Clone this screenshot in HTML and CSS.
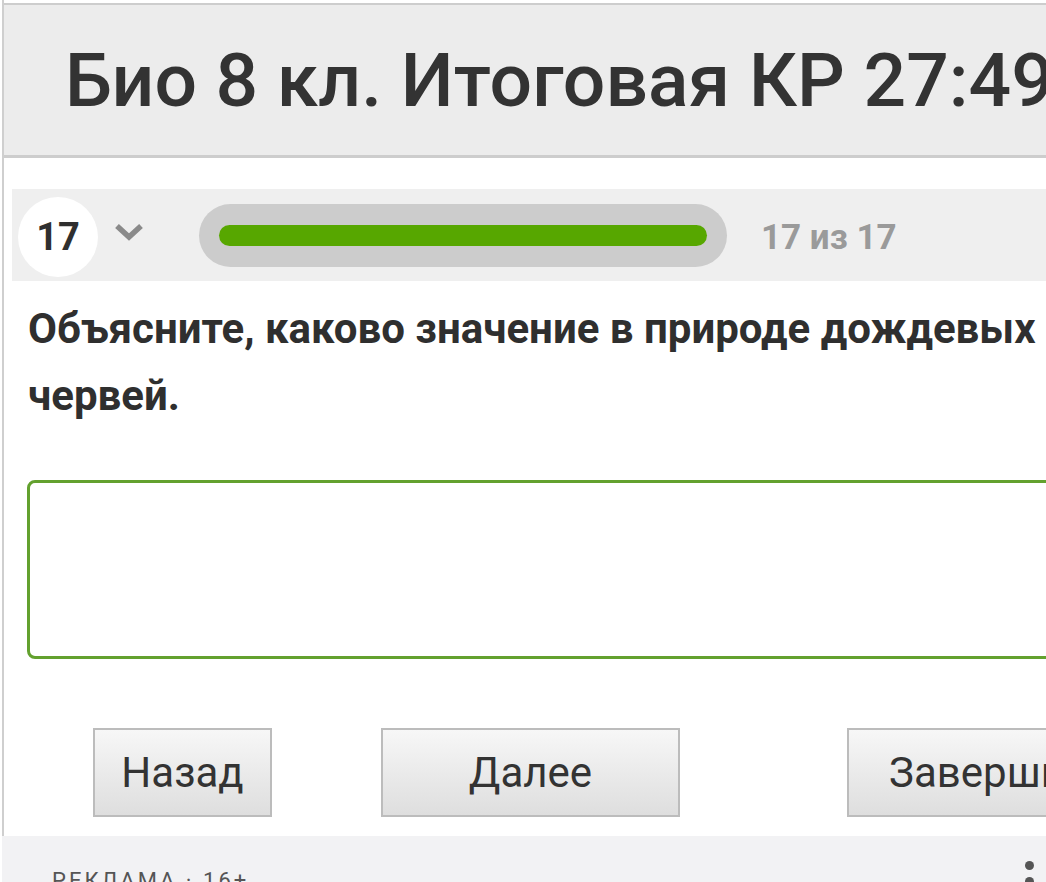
FILE: index.html
```html
<!DOCTYPE html>
<html lang="ru">
<head>
<meta charset="utf-8">
<title>Био 8 кл. Итоговая КР</title>
<link rel="stylesheet" href="styles.css">
</head>
<body>
<div class="page">
  <header class="test-header">
    <h1 class="test-title">Био 8 кл. Итоговая КР 27:49</h1>
  </header>

  <main class="quiz">
    <div class="quiz-nav">
      <div class="q-number">17</div>
      <svg class="q-chevron" width="30" height="20" viewBox="0 0 30 20" aria-hidden="true">
        <path d="M3 3 L15 14 L27 3" fill="none" stroke="#8a8a8a" stroke-width="5.5"/>
      </svg>
      <div class="progress">
        <div class="progress-fill" style="width: 100%"></div>
      </div>
      <div class="q-count">17 из 17</div>
    </div>

    <p class="question">Объясните, каково значение в природе дождевых червей.</p>

    <textarea class="answer"></textarea>

    <div class="actions">
      <button class="btn btn-back" type="button">Назад</button>
      <button class="btn btn-next" type="button">Далее</button>
      <button class="btn btn-finish" type="button">Завершить</button>
    </div>
  </main>

  <aside class="ad">
    <span class="ad-label">РЕКЛАМА · 16+</span>
    <span class="ad-menu" aria-hidden="true"><i></i><i></i><i></i></span>
  </aside>
</div>
</body>
</html>
```

FILE: styles.css
```css
html, body {
  margin: 0;
  padding: 0;
  overflow: hidden;
  background: #ffffff;
}

body {
  font-family: Roboto, "Noto Sans", "Liberation Sans", sans-serif;
  color: #333333;
  width: 1046px;
  height: 882px;
}

.page {
  margin-left: 2px;
  border-left: 2px solid #cfcfcf;
  padding-top: 3px;
  width: 1200px;
}

/* title bar */
.test-header {
  background: #ececec;
  border-top: 2px solid #cdcdcd;
  border-bottom: 3px solid #cdcdcd;
  height: 150px;
  padding-left: 61px;
}

.test-title {
  margin: 0;
  font-size: 75px;
  font-weight: 500;
  line-height: 150px;
  white-space: nowrap;
  color: #333333;
}

/* question area */
.quiz {
  padding-left: 8px;
}

.quiz-nav {
  margin-top: 31px;
  height: 92px;
  background: #efefef;
  display: flex;
  align-items: center;
  padding-left: 6px;
}

.q-number {
  width: 80px;
  height: 80px;
  border-radius: 50%;
  background: #ffffff;
  display: flex;
  align-items: center;
  justify-content: center;
  font-size: 38px;
  font-weight: 700;
  color: #2f2f2f;
  margin-top: 4px;
}

.q-chevron {
  margin-left: 16px;
  margin-top: -4px;
}

.progress {
  margin-left: 55px;
  width: 488px;
  height: 21px;
  padding: 21px 20px;
  background: #cccccc;
  border-radius: 32px;
}

.progress-fill {
  height: 21px;
  border-radius: 11px;
  background: #57a700;
}

.q-count {
  margin-left: 34px;
  font-size: 35px;
  font-weight: 700;
  color: #9a9a9a;
  margin-top: 4px;
}

.question {
  margin: 14px 0 0 16px;
  width: 1016px;
  font-size: 42px;
  font-weight: 700;
  line-height: 67px;
  color: #2f2f2f;
}

.answer {
  display: block;
  margin: 51px 0 0 15px;
  width: 1100px;
  height: 173px;
  border: 3px solid #63a12e;
  border-radius: 8px;
  background: #ffffff;
  resize: none;
  outline: none;
  padding: 0;
}

.actions {
  display: flex;
  margin-top: 69px;
  padding-left: 81px;
  height: 89px;
}

.btn {
  height: 89px;
  border: 2px solid #bcbcbc;
  border-radius: 0;
  background: linear-gradient(#f7f7f7, #dedede);
  font-family: Roboto, "Noto Sans", "Liberation Sans", sans-serif;
  font-size: 42px;
  font-weight: 400;
  color: #333333;
  padding: 0;
  white-space: nowrap;
}

.btn-back {
  width: 179px;
}

.btn-next {
  width: 299px;
  margin-left: 109px;
}

.btn-finish {
  width: 299px;
  margin-left: 167px;
  text-align: left;
  padding-left: 40px;
}

/* advertising strip */
.ad {
  margin-top: 19px;
  margin-left: -2px;
  height: 100px;
  background: #f2f2f4;
  position: relative;
  padding-left: 50px;
}

.ad-label {
  display: block;
  padding-top: 32px;
  font-size: 22px;
  letter-spacing: 3px;
  color: #555555;
  font-weight: 400;
}

.ad-menu {
  position: absolute;
  left: 1023px;
  top: 25px;
  display: flex;
  flex-direction: column;
  gap: 7px;
}

.ad-menu i {
  display: block;
  width: 9px;
  height: 9px;
  border-radius: 50%;
  background: #555555;
}
```
